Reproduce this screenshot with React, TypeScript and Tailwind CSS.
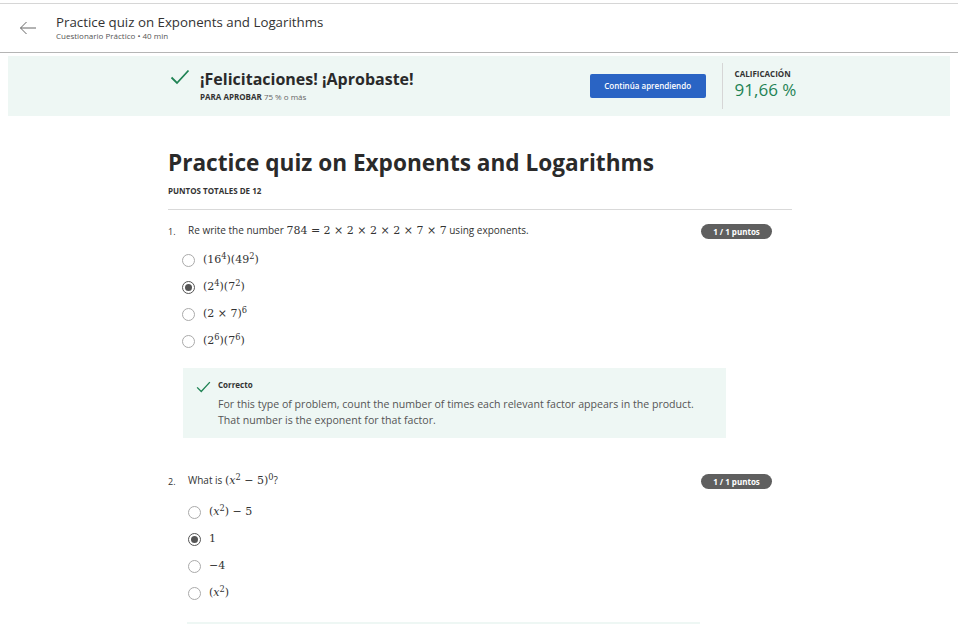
import React from "react"

const sans = "font-['Open_Sans',sans-serif]"
const math = "font-['DejaVu_Serif','Liberation_Serif',serif]"

function Check({ className }: { className: string }) {
  return (
    <svg viewBox="0 0 20 16" className={className} fill="none" stroke="#1f8354" strokeWidth="1.8">
      <path d="M1.5 8.5 L7 14 L18.5 1.5" />
    </svg>
  )
}

function Radio({ selected }: { selected?: boolean }) {
  return (
    <span
      className={
        "flex h-[13px] w-[13px] shrink-0 items-center justify-center rounded-full border " +
        (selected ? "border-[#555]" : "border-[#aaa]")
      }
    >
      {selected && <span className="h-[7px] w-[7px] rounded-full bg-[#555]" />}
    </span>
  )
}

function Badge() {
  return (
    <span className="flex h-[15px] w-[71px] items-center justify-center rounded-full bg-[#5f5f5f] text-[8px] font-bold text-white">
      1 / 1 puntos
    </span>
  )
}

function Option({ selected, children }: { selected?: boolean; children: React.ReactNode }) {
  return (
    <div className="flex h-[27px] items-center gap-[8px]">
      <Radio selected={selected} />
      <span className={math + " text-[11px] text-[#333]"}>{children}</span>
    </div>
  )
}

export default function App() {
  return (
    <div className={sans + " h-[624px] w-[958px] overflow-hidden bg-white text-[#333]"}>
      <div className="mt-[3px] flex h-[50px] items-center border-y border-[#d6d6d6] border-b-[#b5b5b5] bg-white">
        <svg viewBox="0 0 18 14" className="ml-[19px] h-[14px] w-[18px]" fill="none" stroke="#666" strokeWidth="1">
          <path d="M17 7 H1.5 M7.5 1 L1.5 7 L7.5 13" />
        </svg>
        <div className="ml-[19px] -mt-[3px]">
          <div className="text-[13.3px] leading-[18px] text-[#333]">Practice quiz on Exponents and Logarithms</div>
          <div className="text-[8px] leading-[10px] text-[#555]">Cuestionario Práctico • 40 min</div>
        </div>
      </div>

      <div className="mx-[8px] mt-[3px] flex h-[60px] items-center bg-[#eef7f4]">
        <Check className="ml-[162px] -mt-[18px] h-[16px] w-[20px]" />
        <div className="ml-[10px] -mt-[1px]">
          <div className="text-[16px] font-bold leading-[20px] text-[#2a2a2a]">¡Felicitaciones! ¡Aprobaste!</div>
          <div className="mt-[3px] text-[8px] leading-[10px] text-[#666]">
            <span className="font-bold text-[#333]">PARA APROBAR</span> 75 % o más
          </div>
        </div>
        <button className="ml-[176px] h-[24px] w-[116px] rounded-[2px] bg-[#2a64c4] text-[8px] font-semibold text-white">
          Continúa aprendiendo
        </button>
        <div className="ml-[16px] h-[46px] w-px bg-[#d6d6d6]" />
        <div className="ml-[12px] -mt-[2px]">
          <div className="text-[8px] font-bold leading-[10px] text-[#333]">CALIFICACIÓN</div>
          <div className="text-[17px] leading-[22px] text-[#1f8354]">91,66 %</div>
        </div>
      </div>

      <div className="ml-[168px] w-[624px]">
        <h1 className="mt-[33px] text-[22.6px] font-bold leading-[28px] text-[#2a2a2a]">
          Practice quiz on Exponents and Logarithms
        </h1>
        <div className="mt-[9px] text-[8px] font-bold leading-[10px] text-[#333]">PUNTOS TOTALES DE 12</div>
        <div className="mt-[13px] h-px bg-[#d9d9d9]" />

        <div className="mt-[14px] flex h-[15px] items-center justify-between pr-[20px]">
          <div className="flex items-center text-[10px] text-[#333]">
            <span className="w-[20px] text-[9px]">1.</span>
            <span>
              Re write the number{" "}
              <span className={math + " text-[11px]"}>784 = 2 × 2 × 2 × 2 × 7 × 7</span> using exponents.
            </span>
          </div>
          <Badge />
        </div>

        <div className="ml-[14px] mt-[8px]">
          <Option>
            (16<sup>4</sup>)(49<sup>2</sup>)
          </Option>
          <Option selected>
            (2<sup>4</sup>)(7<sup>2</sup>)
          </Option>
          <Option>
            (2 × 7)<sup>6</sup>
          </Option>
          <Option>
            (2<sup>6</sup>)(7<sup>6</sup>)
          </Option>
        </div>

        <div className="ml-[15px] mt-[13px] flex h-[70px] w-[543px] bg-[#eef7f4] pl-[13px] pt-[12px]">
          <Check className="mt-[1px] h-[12px] w-[15px]" />
          <div className="ml-[7px]">
            <div className="text-[8px] font-bold leading-[10px] text-[#333]">Correcto</div>
            <div className="mt-[6px] text-[10.6px] leading-[16px] text-[#555]">
              For this type of problem, count the number of times each relevant factor appears in the product.
              <br />
              That number is the exponent for that factor.
            </div>
          </div>
        </div>

        <div className="mt-[36px] flex h-[15px] items-center justify-between pr-[20px]">
          <div className="flex items-center text-[10px] text-[#333]">
            <span className="w-[20px] text-[9px]">2.</span>
            <span>
              What is{" "}
              <span className={math + " text-[11px]"}>
                (<i>x</i>
                <sup>2</sup> − 5)<sup>0</sup>
              </span>
              ?
            </span>
          </div>
          <Badge />
        </div>

        <div className="ml-[20px] mt-[10px]">
          <Option>
            (<i>x</i>
            <sup>2</sup>) − 5
          </Option>
          <Option selected>1</Option>
          <Option>−4</Option>
          <Option>
            (<i>x</i>
            <sup>2</sup>)
          </Option>
        </div>

        <div className="ml-[19px] mt-[15px] h-[40px] w-[513px] bg-[#eef7f4]" />
      </div>
    </div>
  )
}
